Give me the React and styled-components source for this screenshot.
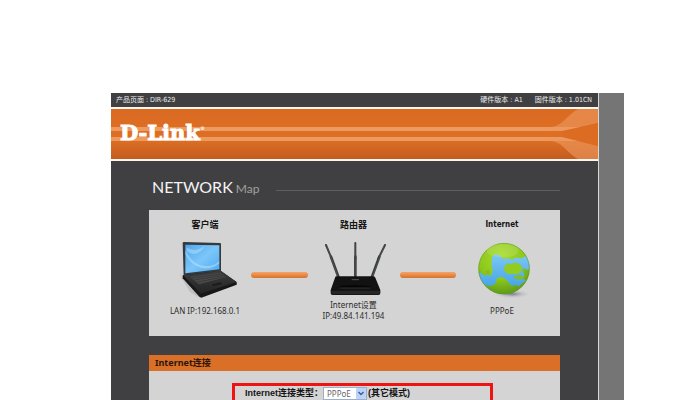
import React, { useState } from 'react';
import styled, { createGlobalStyle } from 'styled-components';

const GlobalStyle = createGlobalStyle`
  * {
    box-sizing: border-box;
  }
  body {
    margin: 0;
    background: #ffffff;
    font-family: 'Noto Sans', 'Noto Sans CJK SC', sans-serif;
  }
`;

const Page = styled.div`
  display: flex;
  height: 100vh;
  overflow: hidden;
  padding: 93px 56px 0 111px;
`;

const Shell = styled.div`
  flex: 1;
  min-width: 0;
  padding-right: 25px;
  background: #757575;
`;

const Main = styled.div`
  min-height: 100%;
  border-right: 1px solid #d8d8d8;
  background: #404042;
`;

const TopBar = styled.header`
  display: flex;
  gap: 12px;
  padding: 0 6px 0 5px;
  color: #ececec;
  font-family: 'DejaVu Sans Condensed', 'DejaVu Sans', 'Noto Sans CJK SC', sans-serif;
  font-size: 7px;
  line-height: 14px;
  white-space: nowrap;
`;

const Product = styled.span`
  flex: 1;
`;

const Banner = styled.div`
  display: flex;
  height: 54px;
  border-top: 2px solid #fff6ec;
  border-bottom: 2px solid #fff6ec;
  background:
    linear-gradient(#ec9a60, #ec9a60) 0 18px / 100% 4px no-repeat,
    linear-gradient(#ec9a60, #ec9a60) 0 28px / 100% 4px no-repeat,
    linear-gradient(#da6a22 0, #de7024 60%, #c45c20 100%);
`;

const Logo = styled.a`
  flex: 1;
  padding: 11px 0 0 9px;
  color: #ffffff;
  font-family: 'DejaVu Serif', serif;
  font-size: 21px;
  font-weight: 700;
  line-height: 25px;
  text-decoration: none;
  -webkit-text-stroke: 1px #ffffff;

  sup {
    font-size: 5px;
    line-height: 5px;
    vertical-align: 10px;
    -webkit-text-stroke: 0;
  }
`;

const Content = styled.main`
  padding: 14px 38px 0;
`;

const MapTitle = styled.h1`
  display: flex;
  align-items: baseline;
  gap: 3px;
  margin: 0 0 9px;
  color: #f4f4f4;
  font-family: Lato, sans-serif;
  font-size: 16px;
  font-weight: 400;
  line-height: 24px;
  padding-left: 3px;

  small {
    color: #a0a0a0;
    font-size: 12px;
  }
`;

const Rule = styled.span`
  flex: 1;
  align-self: center;
  height: 1px;
  margin: 4px 0 0 14px;
  background: #5e5e60;
`;

const MapPanel = styled.section`
  display: flex;
  padding: 9px 12px 15px 10px;
  background: #d4d4d4;
`;

const Node = styled.div`
  display: flex;
  flex-direction: column;
  align-items: center;
  width: 92px;

  svg {
    display: block;
    margin-top: 8px;
  }
`;

const NodeTitle = styled.h2`
  margin: 0;
  color: #151515;
  font-family: 'DejaVu Sans Condensed', 'DejaVu Sans', 'Noto Sans CJK SC', sans-serif;
  font-size: ${(p) => (p.$latin ? 8 : 9)}px;
  font-weight: 700;
  line-height: 12px;
`;

const Caption = styled.p`
  margin: 0;
  color: #2c2c2c;
  font-size: 8px;
  line-height: 11px;
  white-space: nowrap;
`;

const Link = styled.div`
  flex: 1;
  height: 6px;
  margin-top: 53px;
  border-radius: 3px;
  background: linear-gradient(#f2a46c, #ec8a44 50%, #cf7434);
`;

const Section = styled.section`
  margin-top: 19px;
  background: #d4d4d4;
`;

const SectionTitle = styled.h2`
  margin: 0;
  padding: 0 6px;
  background: #da7027;
  color: #2a1608;
  font-size: 9px;
  font-weight: 700;
  line-height: 16px;
`;

const SectionBody = styled.div`
  padding: 12px 67px 20px 83px;
`;

const Highlight = styled.div`
  display: flex;
  align-items: center;
  gap: 1px;
  height: 40px;
  padding: 0 0 20px 10px;
  border: 3px solid #ee1414;
  color: #151515;
  font-family: 'Liberation Sans', 'Noto Sans CJK SC', sans-serif;
  font-size: 9px;
  font-weight: 700;
  line-height: 12px;
  white-space: nowrap;
`;

const FieldLabel = styled.label`
  width: 77px;
`;

const SelectBox = styled.span`
  position: relative;
  display: flex;

  svg {
    position: absolute;
    top: 1px;
    right: 1px;
    pointer-events: none;
  }
`;

const Select = styled.select`
  appearance: none;
  width: 44px;
  height: 13px;
  padding: 0 12px 0 3px;
  border: 1px solid #9db0c4;
  border-radius: 0;
  background: #ffffff;
  color: #666666;
  font-family: 'Noto Sans', sans-serif;
  font-size: 8px;
  line-height: 11px;
`;

function Flare() {
  return (
    <svg width="48" height="50" viewBox="0 0 48 50" aria-hidden="true">
      <path d="M0 18C12 18 17 6 28 0H48V14L14 22H0Z" fill="#ec9a60" opacity=".6" />
      <path d="M0 32C12 32 17 44 28 50H48V37L14 28H0Z" fill="#ec9a60" opacity=".6" />
      <path d="M12 22L48 14V37L12 28Z" fill="#db6c21" />
    </svg>
  );
}

function Laptop() {
  return (
    <svg width="66" height="66" viewBox="96 117 198 198" aria-hidden="true">
      <defs>
        <linearGradient id="screen" x1="0" y1="0" x2="1" y2="1">
          <stop offset="0" stopColor="#4fa6ec" />
          <stop offset=".5" stopColor="#7cc6fa" />
          <stop offset="1" stopColor="#4ca9f0" />
        </linearGradient>
        <linearGradient id="deck" x1="0" y1="0" x2="0" y2="1">
          <stop offset="0" stopColor="#3c3c3c" />
          <stop offset="1" stopColor="#232323" />
        </linearGradient>
      </defs>
      <path d="M118 222L180 294L150 276Z" fill="#aaa" opacity=".5" />
      <path d="M128 130Q128 126 132 126L240 129Q243 129 243 132V214L131 228Z" fill="#343a3e" />
      <path d="M136 134L238 136V208L136 220Z" fill="url(#screen)" />
      <path d="M136 150Q160 202 204 198Q225 196 238 184V190Q206 216 172 199Q148 188 136 162Z" fill="#c4e8ff" opacity=".45" />
      <path d="M140 142Q160 160 196 138Q168 176 140 154Z" fill="#b8e0fd" opacity=".5" />
      <path d="M128 226L243 213L290 246V254L184 293L178 290L128 235Z" fill="#171717" />
      <path d="M130 226L243 213L289 246L182 281Z" fill="url(#deck)" />
      <path d="M150 230L240 218L258 232L176 253Z" fill="#4a4a4a" />
      <path d="M155 234L244 222M162 240L249 226M169 247L254 230" stroke="#303030" strokeWidth="2" />
      <path d="M210 253L240 245L252 252L221 261Z" fill="#1e1e1e" stroke="#484848" />
    </svg>
  );
}

function Router() {
  return (
    <svg width="66" height="60" viewBox="60 117 198 180" aria-hidden="true">
      <g stroke="#3a3d3f" strokeLinecap="round">
        <path d="M75 135L92 176M163 129V176M252 135L232 176" strokeWidth="6" />
        <path d="M90 170L112 230M163 170V232M235 170L213 230" strokeWidth="8" />
      </g>
      <path d="M77 137L110 228M162 130V230M250 137L215 228" stroke="#777" strokeWidth="1" />
      <path d="M107 229H216Q221 229 223 233L238 270V280Q238 285 232 285H95Q89 285 89 280V270L102 233Q103 229 107 229Z" fill="#121212" />
      <path d="M91 272H236V279Q236 283 231 283H96Q91 283 91 279Z" fill="#262626" />
      <path d="M119 258Q163 253 207 258L210 263H116Z" fill="#050505" />
      <path d="M118 264H209" stroke="#555" strokeWidth="1.5" />
      <path d="M152 239H174" stroke="#777" strokeWidth="2" />
    </svg>
  );
}

function Globe() {
  return (
    <svg width="56" height="66" viewBox="252 120 168 198" aria-hidden="true">
      <defs>
        <radialGradient id="land" cx=".45" cy=".25" r=".75">
          <stop offset="0" stopColor="#a8dc2c" />
          <stop offset=".6" stopColor="#8cc81c" />
          <stop offset="1" stopColor="#5f9a18" />
        </radialGradient>
        <radialGradient id="shade">
          <stop offset="0" stopColor="#77778c" />
          <stop offset="1" stopColor="#d4d4d4" stopOpacity="0" />
        </radialGradient>
        <linearGradient id="sea" x1="0" y1="0" x2="0" y2="1">
          <stop offset="0" stopColor="#7cc8f2" />
          <stop offset="1" stopColor="#48a4e8" />
        </linearGradient>
        <clipPath id="ball">
          <circle cx="342" cy="209" r="77" />
        </clipPath>
      </defs>
      <ellipse cx="366" cy="285" rx="58" ry="14" fill="url(#shade)" />
      <circle cx="342" cy="209" r="77" fill="url(#land)" />
      <g clipPath="url(#ball)">
        <path
          d="M306 174L317 165L330 170L339 179L354 178L366 182L376 176L396 178L407 171L424 180V205L411 213L402 207L396 212L404 230L399 238L407 246L394 254L388 262L378 258L365 260L350 243L336 233L321 237L317 252L303 262L286 258L270 244L264 221L274 222L284 231L294 226L303 232L308 216L305 198Z"
          fill="url(#sea)"
        />
        <path d="M344 202L352 193L366 196L374 190L388 194L397 205L392 219L381 226L366 224L354 226L342 214Z" fill="#92cc20" />
        <path d="M371 232L390 228L405 234L392 242L376 240Z" fill="#84bd20" />
        <path d="M286 216L298 214L300 226L290 228Z" fill="#84bd20" />
      </g>
      <circle cx="342" cy="209" r="76" fill="none" stroke="#66942c" strokeWidth="2" opacity=".7" />
      <ellipse cx="338" cy="155" rx="48" ry="20" fill="#ffffff" opacity=".12" />
    </svg>
  );
}

const App = () => {
  const [type, setType] = useState('PPPoE');

  return (
    <>
      <GlobalStyle />
      <Page>
        <Shell>
          <Main>
            <TopBar>
              <Product>产品页面 : DIR-629</Product>
              <span>硬件版本 : A1</span>
              <span>固件版本 : 1.01CN</span>
            </TopBar>
            <Banner>
              <Logo href="#">D-Link<sup>®</sup></Logo>
              <Flare />
            </Banner>
            <Content>
              <MapTitle>
                NETWORK <small>Map</small>
                <Rule />
              </MapTitle>
              <MapPanel>
                <Node>
                  <NodeTitle>客户端</NodeTitle>
                  <Laptop />
                  <Caption>LAN IP:192.168.0.1</Caption>
                </Node>
                <Link />
                <Node>
                  <NodeTitle>路由器</NodeTitle>
                  <Router />
                  <Caption>Internet设置</Caption>
                  <Caption>IP:49.84.141.194</Caption>
                </Node>
                <Link />
                <Node>
                  <NodeTitle $latin>Internet</NodeTitle>
                  <Globe />
                  <Caption>PPPoE</Caption>
                </Node>
              </MapPanel>
              <Section>
                <SectionTitle>Internet连接</SectionTitle>
                <SectionBody>
                  <Highlight>
                    <FieldLabel htmlFor="wan-type">Internet连接类型：</FieldLabel>
                    <SelectBox>
                      <Select id="wan-type" value={type} onChange={(e) => setType(e.target.value)}>
                        <option>PPPoE</option>
                        <option>DHCP</option>
                      </Select>
                      <svg width="10" height="11" viewBox="0 0 10 11" aria-hidden="true">
                        <rect width="10" height="11" rx="1" fill="#bcd2f8" />
                        <path d="M2.5 4L5 6.5L7.5 4" fill="none" stroke="#3f5f94" strokeWidth="1.5" />
                      </svg>
                    </SelectBox>
                    <span>(其它模式)</span>
                  </Highlight>
                </SectionBody>
              </Section>
            </Content>
          </Main>
        </Shell>
      </Page>
    </>
  );
};

export default App;
